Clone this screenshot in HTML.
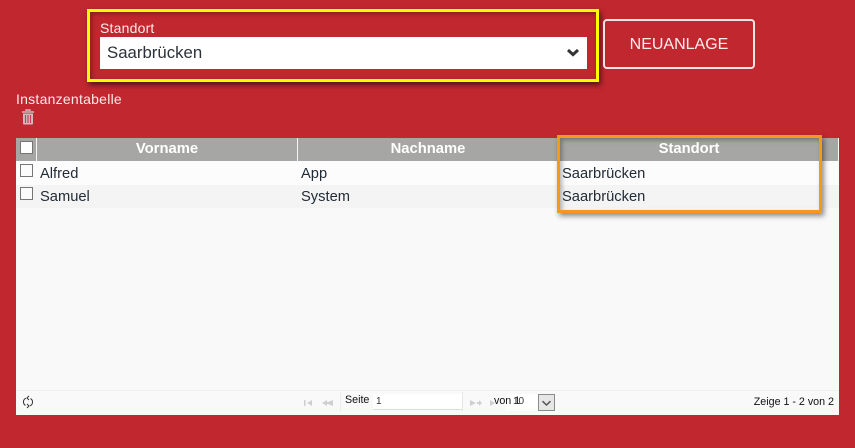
<!DOCTYPE html>
<html lang="de">
<head>
<meta charset="utf-8">
<title>Instanzentabelle</title>
<style>
html,body{margin:0;padding:0}
body{width:855px;height:448px;background:#c1272f;overflow:hidden;position:relative;font-family:"Liberation Sans",sans-serif;color:#222c36}
.a{position:absolute;white-space:nowrap;line-height:1}
.box{position:absolute;box-sizing:border-box;background:#fff}
.cb{position:absolute;box-sizing:border-box;width:13px;height:13px;border:1px solid #767676;background:#fbfbfb}
.h{position:absolute;top:138px;height:23px;line-height:23px;text-align:center;color:#fff;font-weight:bold;font-size:14.8px}
.t{font-size:14.7px}
</style>
</head>
<body>
<!-- Standort selector -->
<div class="a" style="left:100px;top:21px;font-size:14px;color:#fbe9e9;letter-spacing:.2px">Standort</div>
<div class="box" style="left:100px;top:37px;width:487px;height:32px"></div>
<div class="a" style="left:107px;top:45px;font-size:16.8px;color:#2b3239">Saarbrücken</div>
<svg style="position:absolute;left:566px;top:48px" width="14" height="10" viewBox="0 0 14 10"><path d="M2 2 7 6.6 12 2" fill="none" stroke="#333" stroke-width="3"/></svg>
<div style="position:absolute;left:87px;top:9px;width:512px;height:73px;box-sizing:border-box;border:3px solid #ff0;box-shadow:2px 3px 5px rgba(0,0,0,.55),inset 2px 2px 4px rgba(0,0,0,.3)"></div>

<!-- Button -->
<div style="position:absolute;left:603px;top:19px;width:152px;height:50px;box-sizing:border-box;border:2px solid #f6e4e4;border-radius:4px;text-align:center;line-height:47px;color:#fdeeee;font-size:16px">NEUANLAGE</div>

<!-- Title & trash -->
<div class="a" style="left:16px;top:92px;font-size:14px;color:#fbe9e9;letter-spacing:.25px">Instanzentabelle</div>
<svg style="position:absolute;left:21px;top:109px" width="14" height="16" viewBox="0 0 14 16">
<path d="M5 2V1h4v1M1 3h12" fill="none" stroke="#d0b8bc" stroke-width="1.4"/>
<path d="M2 4.5h10V14.5a1 1 0 0 1-1 1H3a1 1 0 0 1-1-1z" fill="#cdbcc0"/>
<path d="M4.5 6v8" stroke="#c9405a" stroke-width="1.2"/><path d="M7 6v8" stroke="#c9405a" stroke-width="1.2"/><path d="M9.5 6v8" stroke="#c9405a" stroke-width="1.2"/>
</svg>

<!-- Table -->
<div style="position:absolute;left:16px;top:138px;width:823px;height:277px;background:#f9f9f9"></div>
<div style="position:absolute;left:16px;top:138px;width:822px;height:23px;background:#a6a6a4"></div>
<div style="position:absolute;left:36px;top:138px;width:1px;height:23px;background:#f4f4f4"></div>
<div style="position:absolute;left:297px;top:138px;width:1px;height:23px;background:#f4f4f4"></div>
<div style="position:absolute;left:16px;top:161px;width:823px;height:24px;background:#fcfcfc"></div>
<div style="position:absolute;left:16px;top:185px;width:823px;height:23px;background:#f4f4f4"></div>

<div class="cb" style="left:20px;top:141px;background:#fff"></div>
<div class="h" style="left:37px;width:260px">Vorname</div>
<div class="h" style="left:298px;width:260px">Nachname</div>
<div class="h" style="left:558px;width:262px">Standort</div>

<div class="cb" style="left:20px;top:164px"></div>
<div class="a t" style="left:40px;top:167px">Alfred</div>
<div class="a t" style="left:301px;top:167px">App</div>
<div class="a t" style="left:562px;top:167px">Saarbrücken</div>
<div class="cb" style="left:20px;top:187px"></div>
<div class="a t" style="left:40px;top:190px">Samuel</div>
<div class="a t" style="left:301px;top:190px">System</div>
<div class="a t" style="left:562px;top:190px">Saarbrücken</div>

<!-- Orange highlight -->
<div style="position:absolute;left:557px;top:135px;width:265px;height:78px;box-sizing:border-box;border:3px solid #f7981d;box-shadow:2px 3px 5px rgba(0,0,0,.45),inset 2px 2px 5px rgba(0,0,0,.3)"></div>

<!-- Footer -->
<div style="position:absolute;left:16px;top:390px;width:823px;height:1px;background:#efefef"></div>
<svg style="position:absolute;left:22px;top:395px" width="12" height="14" viewBox="0 0 12 14" fill="none" stroke="#333" stroke-width="1">
<path d="M4 3.2A4 4 0 0 0 3.5 10.4M8 10.8A4 4 0 0 0 8.5 3.6"/>
<path d="M7 .8 5 3 7 5M5 9 7 11 5 13"/>
</svg>
<svg style="position:absolute;left:304px;top:399px" width="30" height="8" viewBox="0 0 30 8" fill="#cfcfcf">
<path d="M0 1h1.5v6H0zM3 4 8 1v6z"/><path d="M18 4 23 1v2h1l5-2v6l-5-2h-1v2z"/>
</svg>
<div style="position:absolute;left:340px;top:392px;width:1px;height:19px;background:#ececec"></div>
<div class="a" style="left:345px;top:395px;font-size:10.7px;color:#111">Seite</div>
<div style="position:absolute;left:373px;top:394px;width:89px;height:16px;background:#fff;border-bottom:1px solid #ddd;box-sizing:border-box"></div>
<div class="a" style="left:376px;top:397px;font-size:10px;color:#333">1</div>
<div style="position:absolute;left:462px;top:392px;width:1px;height:19px;background:#e6e6e6"></div>
<svg style="position:absolute;left:470px;top:399px" width="26" height="8" viewBox="0 0 26 8" fill="#cfcfcf">
<path d="M0 1l6 3-6 3z"/><path d="M7 3h3v2H7z"/><path d="M9 1l3 3-3 3z"/><path d="M20 1l5 3-5 3z"/>
</svg>
<div style="position:absolute;left:506px;top:394px;width:48px;height:17px;background:#fff"></div>
<div class="a" style="left:494px;top:396px;font-size:10.7px;color:#111">von 1</div>
<div class="a" style="left:513px;top:397px;font-size:10px;color:#333">10</div>
<div style="position:absolute;left:538px;top:394px;width:17px;height:17px;box-sizing:border-box;border:1px solid #8a8a8a;background:#e6e6e6"></div>
<svg style="position:absolute;left:541px;top:400px" width="11" height="7" viewBox="0 0 11 7"><path d="M1.5 1.2 5.5 5 9.5 1.2" fill="none" stroke="#555" stroke-width="1.5"/></svg>
<div class="a" style="right:21px;top:397px;font-size:10.7px;color:#111">Zeige 1 - 2 von 2</div>
</body>
</html>
